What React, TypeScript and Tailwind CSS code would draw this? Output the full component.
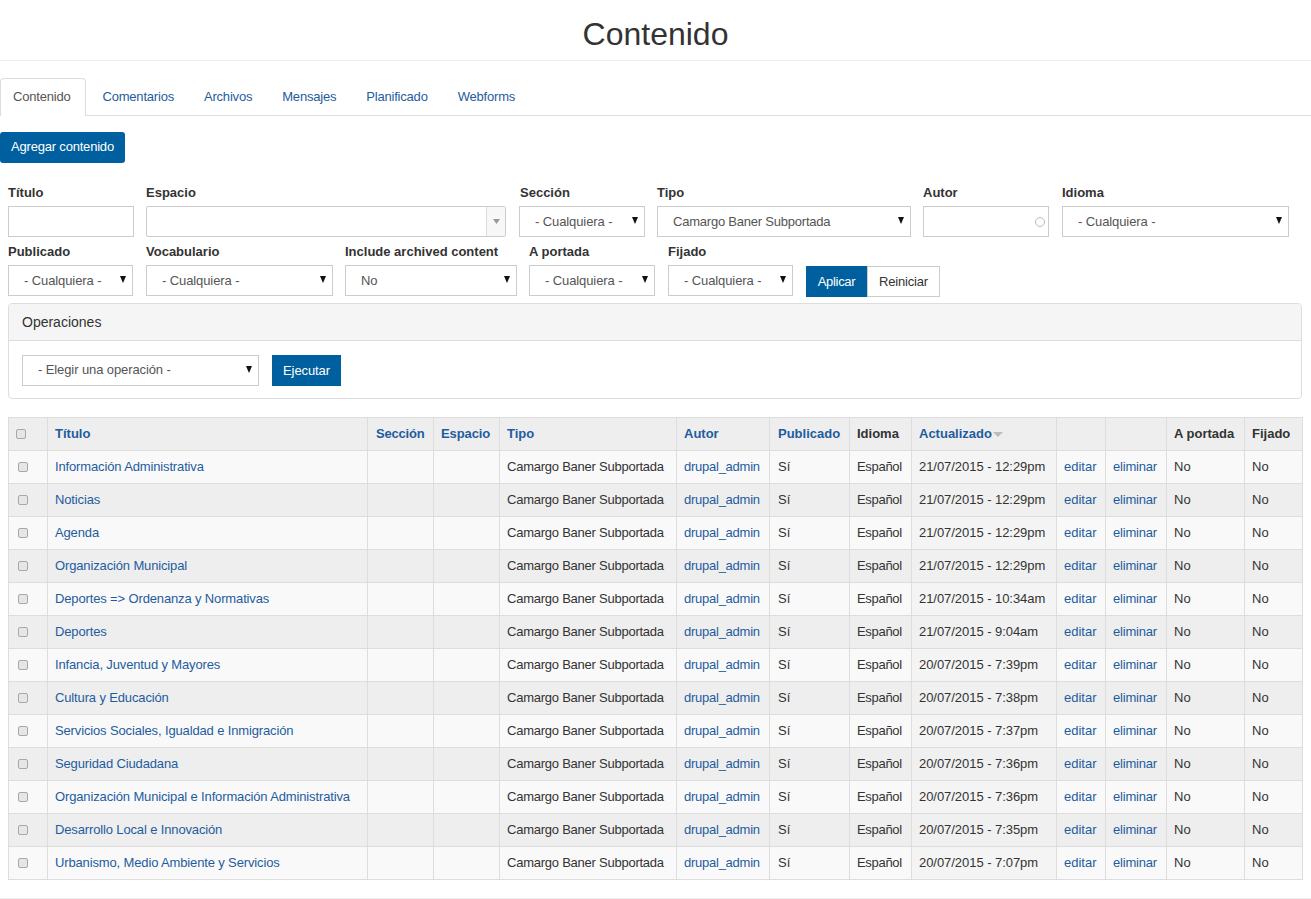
import React from 'react';

const tabs = ['Comentarios', 'Archivos', 'Mensajes', 'Planificado', 'Webforms'];

const rows = [
  ['Información Administrativa', '21/07/2015 - 12:29pm'],
  ['Noticias', '21/07/2015 - 12:29pm'],
  ['Agenda', '21/07/2015 - 12:29pm'],
  ['Organización Municipal', '21/07/2015 - 12:29pm'],
  ['Deportes => Ordenanza y Normativas', '21/07/2015 - 10:34am'],
  ['Deportes', '21/07/2015 - 9:04am'],
  ['Infancia, Juventud y Mayores', '20/07/2015 - 7:39pm'],
  ['Cultura y Educación', '20/07/2015 - 7:38pm'],
  ['Servicios Sociales, Igualdad e Inmigración', '20/07/2015 - 7:37pm'],
  ['Seguridad Ciudadana', '20/07/2015 - 7:36pm'],
  ['Organización Municipal e Información Administrativa', '20/07/2015 - 7:36pm'],
  ['Desarrollo Local e Innovación', '20/07/2015 - 7:35pm'],
  ['Urbanismo, Medio Ambiente y Servicios', '20/07/2015 - 7:07pm'],
];

const colWidths = [
  'w-[39px]', 'w-[320px]', 'w-[66px]', 'w-[66px]', 'w-[177px]', 'w-[93px]', 'w-[80px]',
  'w-[62px]', 'w-[145px]', 'w-[49px]', 'w-[61px]', 'w-[78px]', 'w-[58px]',
];

const Field: React.FC<{ label: string; className: string; children: React.ReactNode }> = ({ label, className, children }) => (
  <div className={className}>
    <label className="block h-[24px] pt-px text-[13px] leading-[20px] font-bold text-[#333]">{label}</label>
    {children}
  </div>
);

const Select: React.FC<{ value: string; className: string; track?: string }> = ({ value, className, track = 'tracking-[-0.1px]' }) => (
  <div className={`relative h-[31px] ${className}`}>
    <select
      defaultValue={value}
      className={`h-full w-full appearance-none rounded-none border border-[#ccc] bg-white pl-[15px] text-[13px] text-[#555] outline-none ${track}`}
    >
      <option>{value}</option>
    </select>
    <svg className="pointer-events-none absolute right-[7px] top-[11px]" width="6" height="7" viewBox="0 0 6 7">
      <path d="M0 0h6L3 7z" fill="#111" />
    </svg>
  </div>
);

const Check: React.FC<{ className?: string }> = ({ className }) => (
  <input
    type="checkbox"
    className={`block h-[10px] w-[10px] appearance-none rounded-[2px] border border-[#a8a8a8] bg-[#e6e6e6] ${className || ''}`}
  />
);

const th = 'border border-[#ddd] bg-[#eee] px-[7px] text-left text-[13px] font-bold whitespace-nowrap';
const td = 'border border-[#ddd] px-[7px] text-[13px] font-normal whitespace-nowrap';
const link = 'text-[#1f5c9e]';

const App: React.FC = () => {
  return (
    <div className="min-h-[899px] bg-white font-['Liberation_Sans',Arial,sans-serif] text-[13px] text-[#333]">
      <h1 className="h-[61px] border-b border-[#eee] pt-[12px] text-center text-[32px] leading-[44px] font-normal text-[#333]">
        Contenido
      </h1>

      <div className="mt-[17px] flex h-[38px] border-b border-[#ddd] tracking-[-0.2px]">
        <a className="h-[38px] rounded-t-[4px] border border-b-0 border-[#ddd] bg-white pl-[12px] pr-[15px] leading-[36px] text-[#555]">
          Contenido
        </a>
        <div className="flex pl-px">
          {tabs.map((t) => (
            <a key={t} className={`px-[15px] leading-[38px] ${link}`}>{t}</a>
          ))}
        </div>
      </div>

      <button className="mt-[16px] block h-[31px] w-[125px] rounded-[3px] bg-[#005f9e] pb-[2px] text-center text-[13px] tracking-[-0.2px] text-white">
        Agregar contenido
      </button>

      <div className="pl-2 pr-[9px] pt-[19px]">
        <div className="flex h-[55px]">
          <Field label="Título" className="w-[138px]">
            <input className="h-[31px] w-[126px] border border-[#ccc] bg-white" />
          </Field>
          <Field label="Espacio" className="w-[373px]">
            <div className="flex h-[31px] w-[360px] rounded-[2px] border border-[#ccc] bg-white">
              <div className="flex-1" />
              <div className="flex w-[19px] items-center justify-center border-l border-[#ddd] bg-[#f7f7f7]">
                <svg width="7" height="5" viewBox="0 0 7 5"><path d="M0 0h7L3.5 5z" fill="#999" /></svg>
              </div>
            </div>
          </Field>
          <Field label="Sección" className="w-[138px] [&>label]:pl-px">
            <Select value="- Cualquiera -" className="w-[126px]" />
          </Field>
          <Field label="Tipo" className="w-[266px]">
            <Select value="Camargo Baner Subportada" className="w-[254px]" track="tracking-[-0.22px]" />
          </Field>
          <Field label="Autor" className="w-[139px]">
            <div className="flex h-[31px] w-[126px] items-center justify-end border border-[#ccc] bg-white pr-[3px]">
              <span className="h-[10px] w-[10px] rounded-full border border-[#bbb]" />
            </div>
          </Field>
          <Field label="Idioma" className="w-[227px]">
            <Select value="- Cualquiera -" className="w-[227px]" />
          </Field>
        </div>

        <div className="mt-[4px] flex h-[55px]">
          <Field label="Publicado" className="w-[138px]">
            <Select value="- Cualquiera -" className="w-[125px]" />
          </Field>
          <Field label="Vocabulario" className="w-[199px]">
            <Select value="- Cualquiera -" className="w-[187px]" />
          </Field>
          <Field label="Include archived content" className="w-[184px]">
            <Select value="No" className="w-[172px]" />
          </Field>
          <Field label="A portada" className="w-[139px]">
            <Select value="- Cualquiera -" className="w-[126px]" />
          </Field>
          <Field label="Fijado" className="w-[138px]">
            <Select value="- Cualquiera -" className="w-[125px]" />
          </Field>
          <div className="flex pt-[25px]">
            <button className="h-[31px] w-[61px] bg-[#005f9e] tracking-[-0.3px] text-white">Aplicar</button>
            <button className="h-[31px] w-[73px] border border-[#ccc] bg-white tracking-[-0.2px] text-[#333]">Reiniciar</button>
          </div>
        </div>

        <div className="mt-[7px] h-[96px] rounded-[4px] border border-[#ddd] bg-white">
          <div className="h-[37px] rounded-t-[3px] border-b border-[#ddd] bg-[#f5f5f5] px-[13px] text-[14px] leading-[36px] text-[#333]">
            Operaciones
          </div>
          <div className="flex items-start gap-[13px] px-[13px] pt-[14px]">
            <Select value="- Elegir una operación -" className="w-[237px]" track="pb-px tracking-[-0.1px]" />
            <button className="h-[31px] w-[69px] bg-[#005f9e] tracking-[-0.1px] text-white">Ejecutar</button>
          </div>
        </div>

        <table className="mt-[18px] w-[1294px] table-fixed border-collapse">
          <colgroup>
            {colWidths.map((w, i) => <col key={i} className={w} />)}
          </colgroup>
          <thead>
            <tr className="h-[33px]">
              <th className={th}><Check /></th>
              <th className={`${th} ${link}`}>Título</th>
              <th className={`${th} ${link} pl-[8px] tracking-[-0.2px]`}>Sección</th>
              <th className={`${th} ${link} tracking-[-0.1px]`}>Espacio</th>
              <th className={`${th} ${link}`}>Tipo</th>
              <th className={`${th} ${link}`}>Autor</th>
              <th className={`${th} ${link} pl-[8px]`}>Publicado</th>
              <th className={th}>Idioma</th>
              <th className={`${th} ${link}`}>
                Actualizado
                <svg className="ml-px inline-block" width="10" height="5" viewBox="0 0 10 5"><path d="M0 0h10L5 5z" fill="#bbb" /></svg>
              </th>
              <th className={th} />
              <th className={th} />
              <th className={th}>A portada</th>
              <th className={th}>Fijado</th>
            </tr>
          </thead>
          <tbody>
            {rows.map(([title, date], i) => {
              const bg = i % 2 === 0 ? 'bg-[#f9f9f9]' : 'bg-[#eee]';
              return (
                <tr key={title} className={`h-[33px] ${bg}`}>
                  <td className={td}><Check className="ml-[2px]" /></td>
                  <td className={td}><a className={`${link} tracking-[-0.14px]`}>{title}</a></td>
                  <td className={td} />
                  <td className={td} />
                  <td className={`${td} tracking-[-0.24px]`}>Camargo Baner Subportada</td>
                  <td className={td}><a className={`${link} tracking-[-0.25px]`}>drupal_admin</a></td>
                  <td className={`${td} pl-[8px]`}>Sí</td>
                  <td className={`${td} tracking-[-0.3px]`}>Español</td>
                  <td className={`${td} tracking-[-0.05px] ${i % 2 === 0 ? 'bg-[#f4f4f4]' : 'bg-[#f0f0f0]'}`}>{date}</td>
                  <td className={td}><a className={link}>editar</a></td>
                  <td className={td}><a className={`${link} tracking-[-0.2px]`}>eliminar</a></td>
                  <td className={td}>No</td>
                  <td className={td}>No</td>
                </tr>
              );
            })}
          </tbody>
        </table>
      </div>

      <div className="mt-[18px] border-t border-[#eee]" />
    </div>
  );
};

export default App;
